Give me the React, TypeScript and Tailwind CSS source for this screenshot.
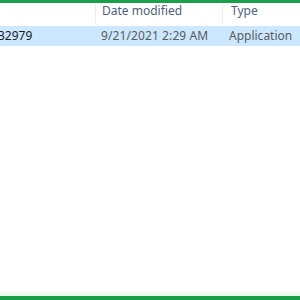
import React from "react";

export default function App() {
  return (
    <div
      className="w-[300px] h-[300px] bg-white flex flex-col overflow-hidden"
      style={{ fontFamily: '"Noto Sans", "Open Sans", sans-serif' }}
    >
      <div className="h-[3px] bg-[#1aa04a] shrink-0" />
      <div className="h-[20px] flex text-[12px] text-[#4c607a] shrink-0">
        <div className="w-[96px] border-r border-[#ececec]" />
        <div className="w-[127px] pl-[6px] leading-[16px] border-r border-[#ececec]">Date modified</div>
        <div className="flex-1 pl-[8px] leading-[16px]">Type</div>
      </div>
      <div className="mt-[3px] h-[20px] flex items-center bg-[#cce8ff] border-y border-[#cde8ff] text-[12px] text-[#1a1a1a] shrink-0">
        <div className="w-[96px] -ml-[2px] leading-[18px]">32979</div>
        <div className="w-[130px] pl-[7px] text-[#5a5a5a] leading-[18px] tracking-[0.1px]">9/21/2021 2:29 AM</div>
        <div className="flex-1 pl-[5px] text-[#5a5a5a] leading-[18px]">Application</div>
      </div>
      <div className="flex-1" />
      <div className="h-[6px] bg-gradient-to-b from-white to-[#e6f6ea] shrink-0" />
      <div className="h-[4px] bg-[#1aa04a] shrink-0" />
    </div>
  );
}
